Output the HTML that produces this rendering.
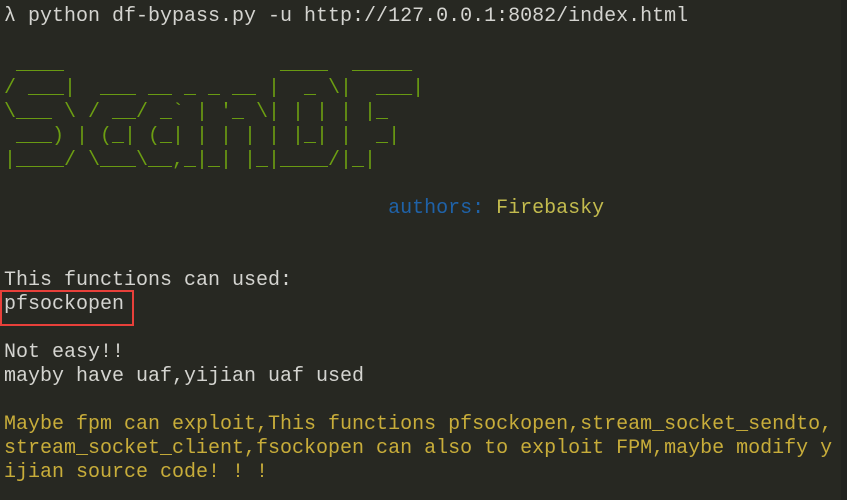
<!DOCTYPE html>
<html><head><meta charset="utf-8"><style>
html,body{margin:0;padding:0;background:#272822;width:847px;height:500px;overflow:hidden}
pre{margin:0;position:absolute;left:4px;top:5px;font-family:"Liberation Mono",monospace;font-size:20px;line-height:24px;color:#d4d4d0;white-space:pre}
.g{color:#6c9e12}.b{color:#1f62a8}.y{color:#c3bb4e}.o{color:#c8ad3a}
.box{position:absolute;left:0;top:290px;width:130px;height:32px;border:2px solid #e8403a}
.edge{position:absolute;right:0;top:0;width:6px;height:500px;background:#222320}
</style></head><body>
<pre>λ python df-bypass.py -u http://127.0.0.1:8082/index.html

<span class="g"> ____                  ____  _____ 
/ ___|  ___ __ _ _ __ |  _ \|  ___|
\___ \ / __/ _` | '_ \| | | | |_   
 ___) | (_| (_| | | | | |_| |  _|  
|____/ \___\__,_|_| |_|____/|_|    </span>

                                <span class="b">authors:</span> <span class="y">Firebasky</span>


This functions can used:
pfsockopen

Not easy!!
mayby have uaf,yijian uaf used

<span class="o">Maybe fpm can exploit,This functions pfsockopen,stream_socket_sendto,
stream_socket_client,fsockopen can also to exploit FPM,maybe modify y
ijian source code! ! !</span></pre>
<div class="box"></div>
<div class="edge"></div>
</body></html>
